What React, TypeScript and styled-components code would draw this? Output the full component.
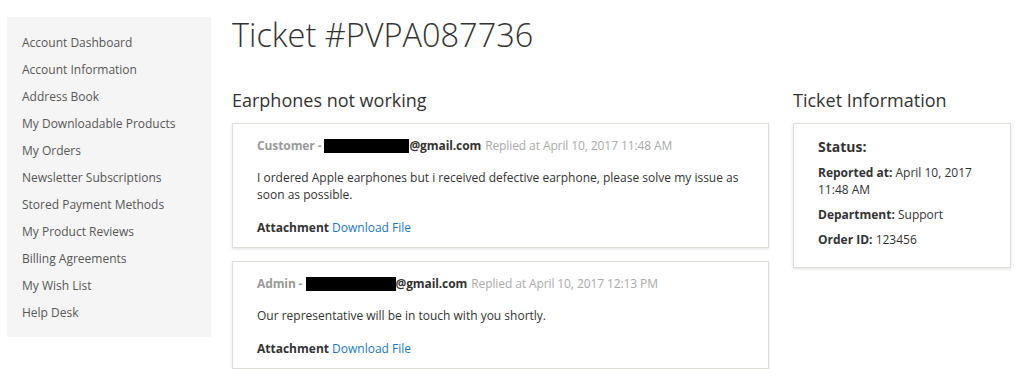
import React from "react";
import styled, { createGlobalStyle } from "styled-components";

const Global = createGlobalStyle`
  html, body { margin: 0; padding: 0; background: #fff; }
  body { font-family: "Open Sans", "Liberation Sans", sans-serif; color: #333; }
  * { box-sizing: border-box; }
`;

const Page = styled.div`
  display: flex;
  align-items: flex-start;
  gap: 21px;
  padding: 17px 0 0 7px;
  width: 1024px;
`;

const Sidebar = styled.nav`
  width: 204px;
  background: #f5f5f5;
  padding: 12px 0 11px 15px;
  display: flex;
  flex-direction: column;
`;

const NavItem = styled.a`
  font-size: 12px;
  line-height: 27px;
  color: #575757;
  text-decoration: none;
`;

const Main = styled.main`
  flex: 1;
  display: flex;
  flex-direction: column;
`;

const Title = styled.h1`
  margin: 0;
  font-size: 32.5px;
  font-weight: 300;
  line-height: 36px;
  color: #333;
`;

const Columns = styled.div`
  display: flex;
  gap: 24px;
  margin-top: 35px;
`;

const LeftCol = styled.section`
  width: 537px;
  display: flex;
  flex-direction: column;
`;

const RightCol = styled.aside`
  width: 218px;
  display: flex;
  flex-direction: column;
`;

const SectionTitle = styled.h2`
  margin: 0 0 11px;
  font-size: 18px;
  font-weight: 400;
  line-height: 24px;
  color: #333;
`;

const Card = styled.div<{ $pad?: string }>`
  border: 1px solid #e2ddd6;
  box-shadow: 0 1px 3px rgba(0, 0, 0, 0.12);
  background: #fff;
  padding: ${(p) => p.$pad || "13px 24px 11px"};
`;

const Messages = styled.div`
  display: flex;
  flex-direction: column;
  gap: 13px;
`;

const Header = styled.div`
  font-size: 12px;
  line-height: 17px;
  display: flex;
  align-items: center;
  white-space: nowrap;
  letter-spacing: -0.1px;
`;

const Author = styled.span`
  font-weight: 700;
  color: #9a9a9a;
  margin-right: 3px;
`;

const Redacted = styled.span<{ $w: number }>`
  display: inline-block;
  width: ${(p) => p.$w}px;
  height: 14px;
  background: #000;
`;

const Email = styled.span`
  font-weight: 700;
  color: #333;
`;

const Replied = styled.span`
  color: #aaa;
  margin-left: 4px;
`;

const Body = styled.p`
  margin: 15px 0 0;
  font-size: 12px;
  line-height: 17px;
  color: #333;
`;

const Attachment = styled.p`
  margin: 16px 0 0;
  font-size: 12px;
  line-height: 17px;
`;

const Bold = styled.b`
  font-weight: 700;
  color: #333;
`;

const Link = styled.a`
  color: #1979c3;
  text-decoration: none;
`;

const Status = styled.div`
  font-size: 14px;
  font-weight: 700;
  line-height: 19px;
  color: #333;
`;

const InfoRow = styled.p<{ $mt?: number }>`
  margin: ${(p) => p.$mt ?? 8}px 0 0;
  font-size: 12px;
  line-height: 17px;
  color: #333;
`;

const nav = [
  "Account Dashboard",
  "Account Information",
  "Address Book",
  "My Downloadable Products",
  "My Orders",
  "Newsletter Subscriptions",
  "Stored Payment Methods",
  "My Product Reviews",
  "Billing Agreements",
  "My Wish List",
  "Help Desk",
];

const messages = [
  {
    author: "Customer",
    w: 85,
    date: "April 10, 2017 11:48 AM",
    text: "I ordered Apple earphones but i received defective earphone, please solve my issue as soon as possible.",
  },
  {
    author: "Admin",
    w: 90,
    date: "April 10, 2017 12:13 PM",
    text: "Our representative will be in touch with you shortly.",
  },
];

export default function App() {
  return (
    <>
      <Global />
      <Page>
        <Sidebar>
          {nav.map((n) => (
            <NavItem key={n} href="#">
              {n}
            </NavItem>
          ))}
        </Sidebar>
        <Main>
          <Title>Ticket #PVPA087736</Title>
          <Columns>
            <LeftCol>
              <SectionTitle>Earphones not working</SectionTitle>
              <Messages>
                {messages.map((m) => (
                  <Card key={m.author}>
                    <Header>
                      <Author>{m.author} -</Author>
                      <Redacted $w={m.w} />
                      <Email>@gmail.com</Email>
                      <Replied>Replied at {m.date}</Replied>
                    </Header>
                    <Body>{m.text}</Body>
                    <Attachment>
                      <Bold>Attachment</Bold> <Link href="#">Download File</Link>
                    </Attachment>
                  </Card>
                ))}
              </Messages>
            </LeftCol>
            <RightCol>
              <SectionTitle>Ticket Information</SectionTitle>
              <Card $pad="13px 24px 19px">
                <Status>Status:</Status>
                <InfoRow $mt={8}>
                  <Bold>Reported at:</Bold> April 10, 2017
                  <br />
                  11:48 AM
                </InfoRow>
                <InfoRow>
                  <Bold>Department:</Bold> Support
                </InfoRow>
                <InfoRow>
                  <Bold>Order ID:</Bold> 123456
                </InfoRow>
              </Card>
            </RightCol>
          </Columns>
        </Main>
      </Page>
    </>
  );
}
